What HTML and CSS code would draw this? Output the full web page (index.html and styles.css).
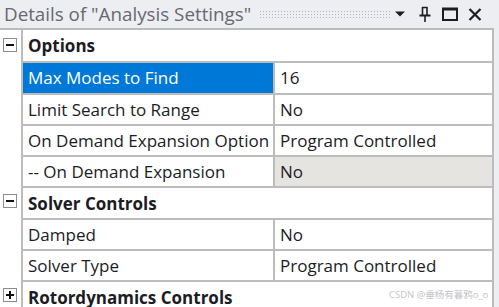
FILE: index.html
```html
<!DOCTYPE html>
<html>
<head>
    <title>Details of "Analysis Settings"</title>
    <meta charset="UTF-8"/>
    <link rel="stylesheet" href="styles.css">
</head>
<body>
<div class="panel">
    <div class="titlebar">
        <span class="title">Details of "Analysis Settings"</span>
        <span class="grip"></span>
        <span class="tool">
            <svg width="12" height="8" viewBox="0 0 12 8"><path d="M1 1.5 H11 L6 6.5 Z" fill="#1e1e1e"/></svg>
        </span>
        <span class="tool">
            <svg width="12" height="16" viewBox="0 0 12 16">
                <path d="M3.5 1 V9 M8 1 V9 M3 1.5 H8.5" stroke="#1e1e1e" stroke-width="1.6" fill="none"/>
                <path d="M0.5 9.5 H11.5" stroke="#1e1e1e" stroke-width="2"/>
                <path d="M6 10 V16" stroke="#1e1e1e" stroke-width="1.6"/>
            </svg>
        </span>
        <span class="tool">
            <svg width="16" height="14" viewBox="0 0 16 14"><rect x="1" y="1.5" width="14" height="11.5" fill="none" stroke="#1e1e1e" stroke-width="2"/><path d="M1 2.5 H15" stroke="#1e1e1e" stroke-width="2"/></svg>
        </span>
        <span class="tool">
            <svg width="14" height="13" viewBox="0 0 14 13"><path d="M1.5 1 L12.5 12 M12.5 1 L1.5 12" stroke="#1e1e1e" stroke-width="2.2"/></svg>
        </span>
    </div>

    <div class="grid">
        <div class="row group">
            <div class="toggle"><span class="box minus"></span></div>
            <div class="name">Options</div>
        </div>
        <div class="row selected">
            <div class="toggle"></div>
            <div class="name">Max Modes to Find</div>
            <div class="value">16</div>
        </div>
        <div class="row">
            <div class="toggle"></div>
            <div class="name">Limit Search to Range</div>
            <div class="value">No</div>
        </div>
        <div class="row">
            <div class="toggle"></div>
            <div class="name">On Demand Expansion Option</div>
            <div class="value">Program Controlled</div>
        </div>
        <div class="row">
            <div class="toggle"></div>
            <div class="name">-- On Demand Expansion</div>
            <div class="value readonly">No</div>
        </div>
        <div class="row group">
            <div class="toggle"><span class="box minus"></span></div>
            <div class="name">Solver Controls</div>
        </div>
        <div class="row">
            <div class="toggle"></div>
            <div class="name">Damped</div>
            <div class="value">No</div>
        </div>
        <div class="row">
            <div class="toggle"></div>
            <div class="name">Solver Type</div>
            <div class="value">Program Controlled</div>
        </div>
        <div class="row group">
            <div class="toggle"><span class="box plus"></span></div>
            <div class="name">Rotordynamics Controls</div>
        </div>
    </div>
</div>
<div class="watermark">CSDN @垂杨有暮鸦o_o</div>
</body>
</html>
```

FILE: styles.css
```css
html, body {
    height: 100%;
}

body {
    margin: 0;
    background-color: #edeef2;
    font-family: "Open Sans", "Noto Sans CJK SC", sans-serif;
    font-size: 17px;
    color: #1c1c24;
    overflow: hidden;
    position: relative;
}

.panel {
    width: 494px;
}

.titlebar {
    display: flex;
    align-items: center;
    width: 499px;
    height: 28px;
    padding: 0 12px 0 4px;
    box-sizing: border-box;
    background-color: #edeef2;
}

.title {
    font-size: 18.8px;
    color: #686870;
    white-space: nowrap;
}

.grip {
    flex: 1;
    height: 9px;
    margin: 0 -4px 0 8px;
    background-image: radial-gradient(circle, #b4b4bc 0.7px, transparent 1px);
    background-size: 3px 3px;
}

.tool {
    display: flex;
    align-items: center;
    justify-content: center;
    width: 25px;
}

.grid {
    border-top: 2px solid #bcbcbc;
    border-right: 2px solid #bcbcbc;
    background-color: #fff;
}

.row {
    display: grid;
    grid-template-columns: 23px 252px 1fr;
    height: 31.3px;
}

.row:first-child > .name,
.row:first-child > .value {
    border-top: 0;
}

.toggle {
    border-right: 2px solid #bcbcbc;
    display: flex;
    align-items: center;
    padding-left: 3px;
}

.name, .value {
    border-top: 2px solid #bcbcbc;
    display: flex;
    align-items: center;
    padding-left: 5px;
    white-space: nowrap;
    overflow: hidden;
}

.name {
    border-right: 2px solid #bcbcbc;
}

.group .name {
    grid-column: 2 / 4;
    border-right: 0;
    font-weight: bold;
}

.selected .name {
    background-color: #0078d7;
    color: #fff;
}

.readonly {
    background-color: #e6e4e0;
}

.box {
    position: relative;
    width: 12px;
    height: 12px;
    border: 1px solid #8c8c8c;
    background: #fff;
    margin-top: -2px;
}

.box::before, .plus::after {
    content: "";
    position: absolute;
    background: #111;
}

.box::before {
    left: 2px;
    right: 2px;
    top: 5px;
    height: 2px;
}

.plus::after {
    top: 2px;
    bottom: 2px;
    left: 5px;
    width: 2px;
}

.watermark {
    position: absolute;
    left: 389px;
    bottom: 6px;
    font-size: 9.5px;
    color: #c4c4c8;
    white-space: nowrap;
}
```
